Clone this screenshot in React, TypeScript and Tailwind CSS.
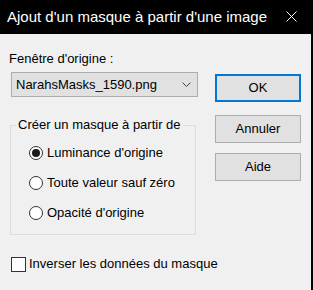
const font = { fontFamily: '"Liberation Sans", Arial, sans-serif' };

function Radio({ checked, label }: { checked?: boolean; label: string }) {
  return (
    <div className="flex h-[16px] items-center">
      <span className="flex h-[14px] w-[14px] items-center justify-center rounded-full border border-[#333333] bg-white">
        {checked && <span className="h-[8px] w-[8px] rounded-full bg-[#1a1a1a]" />}
      </span>
      <span className="ml-[4px] whitespace-nowrap text-[13px] leading-[16px] text-black">{label}</span>
    </div>
  );
}

function Button({ label, primary, className }: { label: string; primary?: boolean; className?: string }) {
  return (
    <div
      className={`flex h-[28px] w-[86px] items-center justify-center bg-[#E1E1E1] text-[13px] text-black ${
        primary ? 'border-2 border-[#0078D7]' : 'border border-[#ADADAD]'
      } ${className ?? ''}`}
    >
      {label}
    </div>
  );
}

export default function App() {
  return (
    <div className="flex h-[290px] w-[313px] flex-col overflow-hidden bg-[#F0F0F0]" style={font}>
      {/* Title bar */}
      <div className="flex h-[34px] shrink-0 items-center justify-between bg-black pl-[7px] pr-[16px]">
        <span className="text-[15px] leading-[18px] text-white">Ajout d'un masque à partir d'une image</span>
        <svg width="11" height="11" viewBox="0 0 11 11" className="mt-[-1px]">
          <path d="M0.5 0.5 L10.5 10.5 M10.5 0.5 L0.5 10.5" stroke="white" strokeWidth="1" />
        </svg>
      </div>

      <div className="flex flex-1 border-r-2 border-black pl-[9px]">
        {/* Left column */}
        <div className="flex w-[189px] flex-col">
          <div className="mt-[17px] text-[13px] leading-[16px] text-black">Fenêtre d'origine :</div>
          <div className="ml-[2px] mt-[5px] flex h-[25px] w-[187px] items-center justify-between border border-[#ADADAD] bg-[#E1E1E1] pl-[4px] pr-[6px]">
            <span className="text-[13px] text-black">NarahsMasks_1590.png</span>
            <svg width="9" height="5" viewBox="0 0 9 5">
              <path d="M0.5 0.5 L4.5 4.5 L8.5 0.5" fill="none" stroke="#444444" strokeWidth="1" />
            </svg>
          </div>

          <fieldset className="ml-[1px] mt-[20px] w-[186px] border border-[#DCDCDC] pb-[13px]">
            <legend className="ml-[5px] px-[2px] text-[13px] leading-[16px] text-black">Créer un masque à partir de</legend>
            <div className="mt-[12px] flex flex-col gap-[14px] pl-[18px]">
              <Radio checked label="Luminance d'origine" />
              <Radio label="Toute valeur sauf zéro" />
              <Radio label="Opacité d'origine" />
            </div>
          </fieldset>

          <div className="ml-[2px] mt-[21px] flex h-[16px] items-center">
            <span className="h-[15px] w-[15px] shrink-0 border border-[#333333] bg-white" />
            <span className="ml-[3px] whitespace-nowrap text-[13px] leading-[16px] text-black">Inverser les données du masque</span>
          </div>
        </div>

        {/* Right column */}
        <div className="ml-[17px] flex flex-col">
          <Button label="OK" primary className="mt-[40px]" />
          <Button label="Annuler" className="mt-[13px]" />
          <Button label="Aide" className="mt-[10px]" />
        </div>
      </div>
    </div>
  );
}
